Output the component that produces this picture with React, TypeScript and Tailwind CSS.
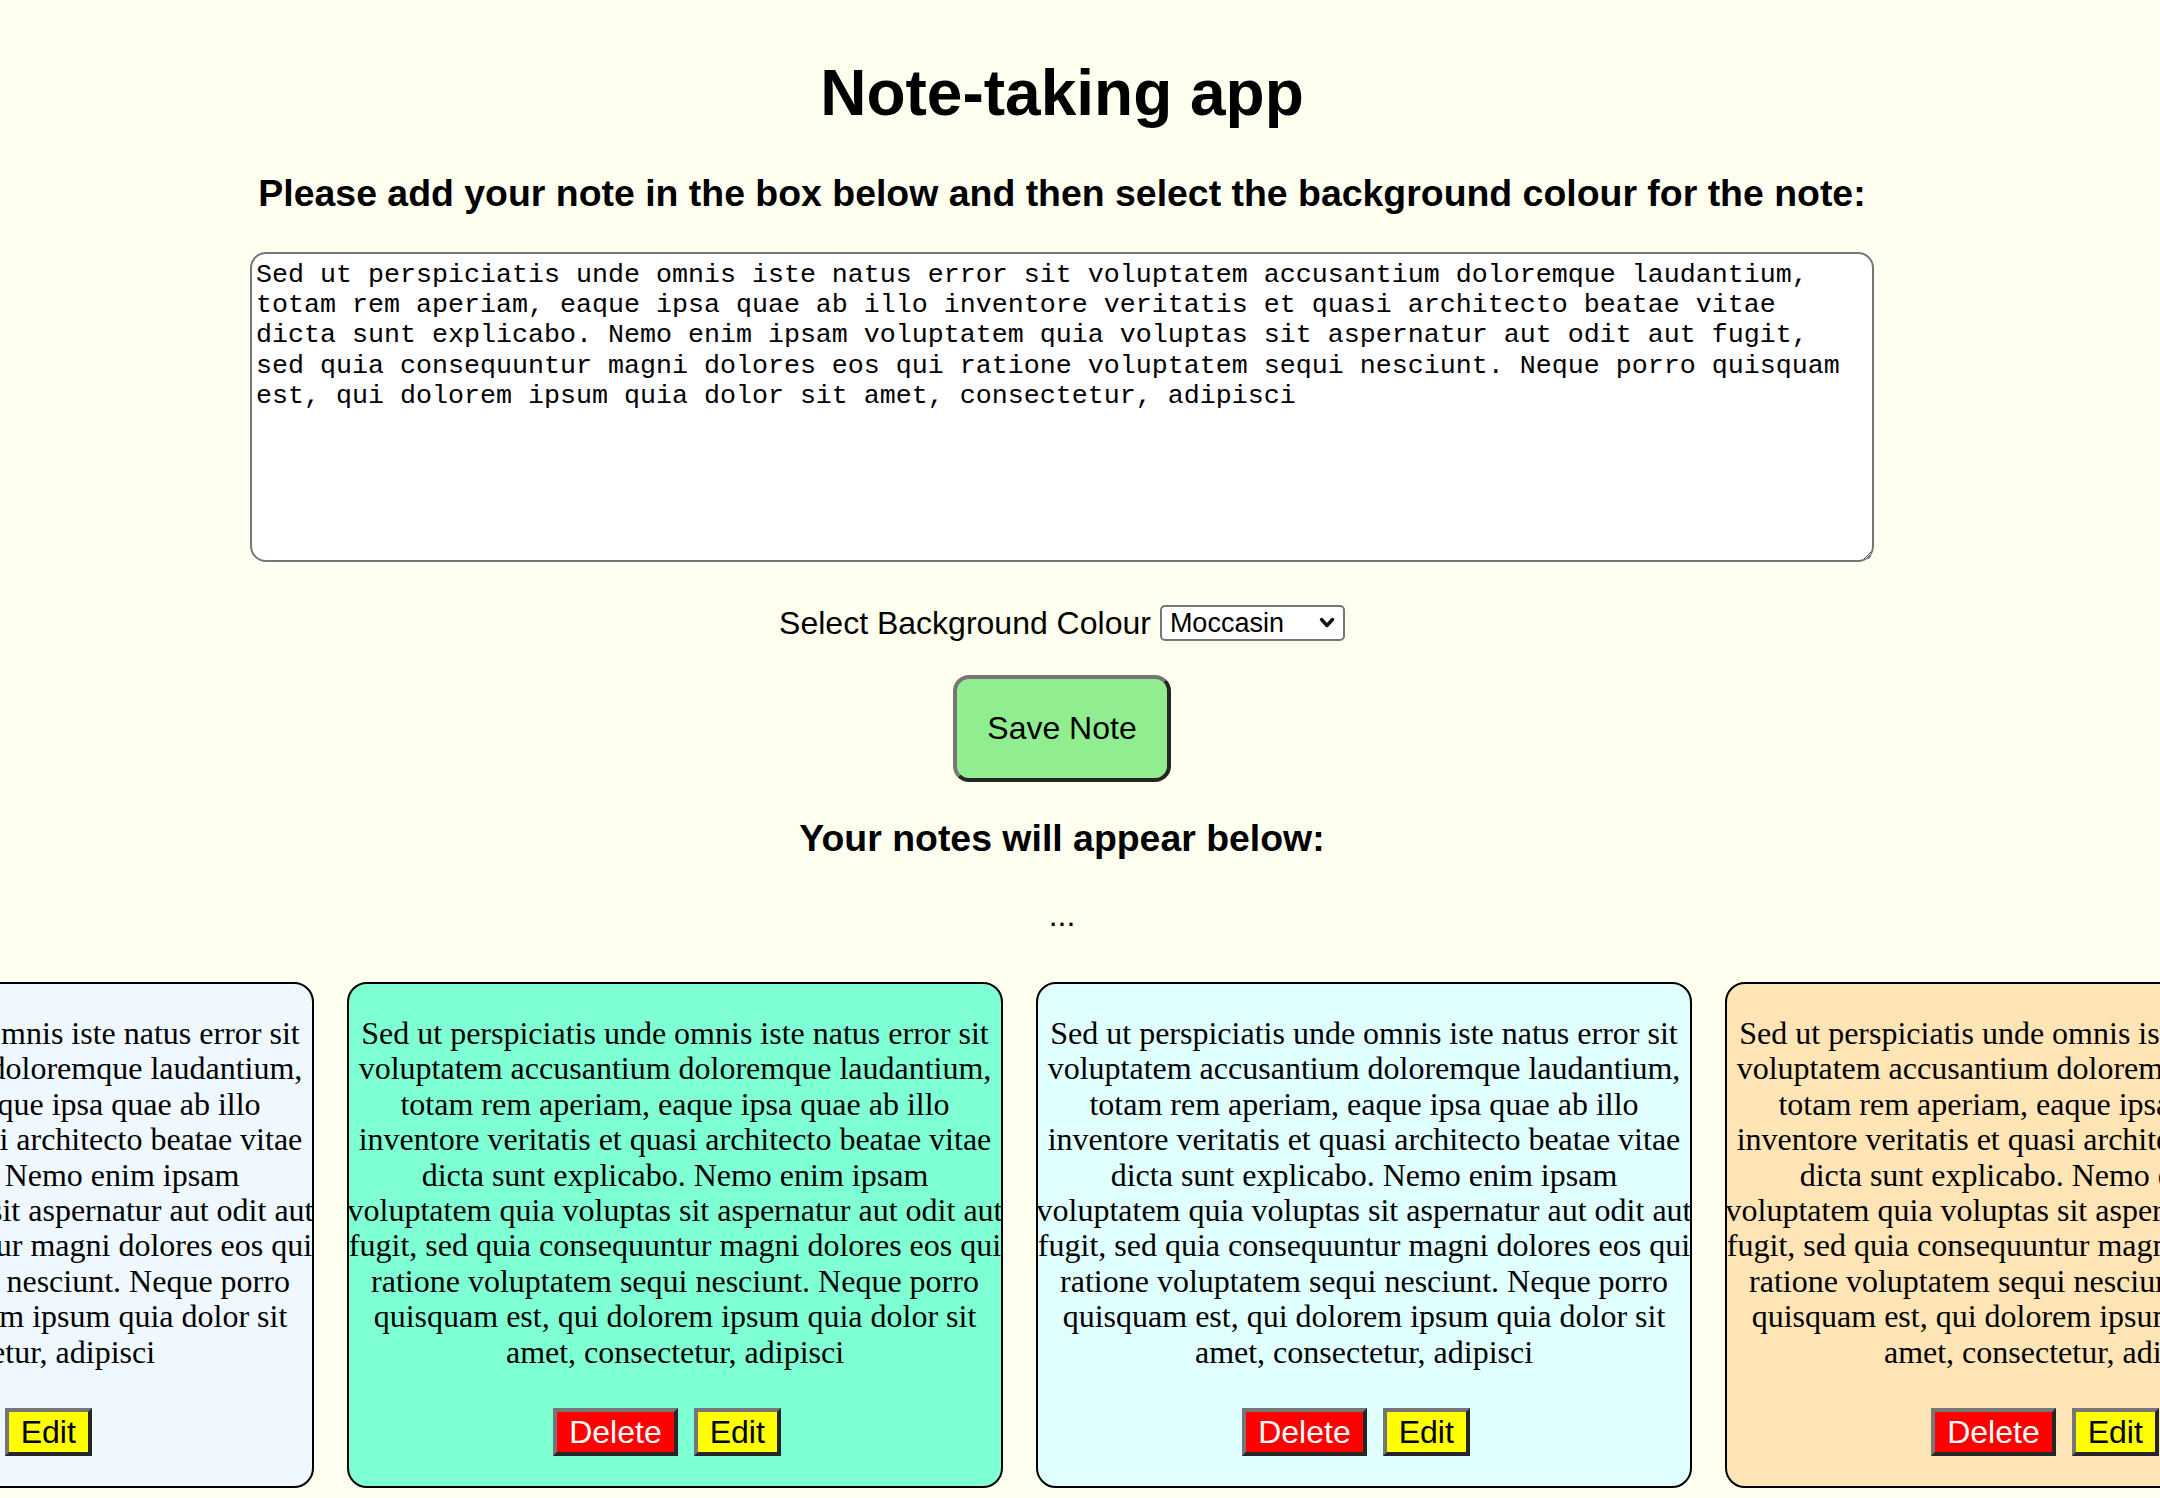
import { useState } from "react";

const LOREM =
  "Sed ut perspiciatis unde omnis iste natus error sit voluptatem accusantium doloremque laudantium, totam rem aperiam, eaque ipsa quae ab illo inventore veritatis et quasi architecto beatae vitae dicta sunt explicabo. Nemo enim ipsam voluptatem quia voluptas sit aspernatur aut odit aut fugit, sed quia consequuntur magni dolores eos qui ratione voluptatem sequi nesciunt. Neque porro quisquam est, qui dolorem ipsum quia dolor sit amet, consectetur, adipisci";

const colours = ["AliceBlue", "Aquamarine", "LightCyan", "Moccasin", "Lavender", "MistyRose"];

type Note = { id: number; text: string; bg: string };

const notes: Note[] = [
  { id: 1, text: LOREM, bg: "bg-[#f0f8ff]" },
  { id: 2, text: LOREM, bg: "bg-[#7fffd4]" },
  { id: 3, text: LOREM, bg: "bg-[#e0ffff]" },
  { id: 4, text: LOREM, bg: "bg-[#ffe4b5]" },
];

function NoteCard({ note }: { note: Note }) {
  return (
    <div
      className={`${note.bg} flex w-[656px] shrink-0 flex-col rounded-[20px] border-2 border-black pb-[30px]`}
    >
      <p className="-mx-[3px] mt-[32px] text-center font-['Liberation_Serif',serif] text-[32px] leading-[35.4px] text-black">
        {note.text}
      </p>
      <div className="mt-[38px] flex justify-center">
        <button className="mr-[16px] border-4 border-t-[#767676] border-l-[#767676] border-b-[#262626] border-r-[#262626] bg-[#ff0000] px-[12px] py-[2px] text-[32px] leading-[36px] text-white">
          Delete
        </button>
        <button className="mr-[16px] border-4 border-t-[#767676] border-l-[#767676] border-b-[#262626] border-r-[#262626] bg-[#ffff00] px-[12px] py-[2px] text-[32px] leading-[36px] text-black">
          Edit
        </button>
      </div>
    </div>
  );
}

export default function App() {
  const [colour, setColour] = useState("Moccasin");

  return (
    <div className="min-h-screen w-full overflow-hidden bg-[#fffff0] pb-[10px] font-['Liberation_Sans',Arial,sans-serif] text-black">
      <div className="flex flex-col items-center pr-[36px]">
        <h1 className="mt-[56px] text-[64px] font-bold leading-[74px]">Note-taking app</h1>
        <h3 className="mt-[42px] text-[37.44px] font-bold leading-[43px]">
          Please add your note in the box below and then select the background colour for the note:
        </h3>
        <textarea
          defaultValue={LOREM}
          spellCheck={false}
          className="mt-[37px] h-[310px] w-[1624px] rounded-[16px] border-2 border-[#767676] bg-white px-[4px] pt-[6px] pb-[4px] font-['Liberation_Mono','Courier_New',monospace] text-[26.67px] leading-[30.2px] text-black outline-none"
        />
        <div className="mt-[43px] flex h-[36px] items-center gap-[9px]">
          <label className="text-[32px] leading-[37px]">Select Background Colour</label>
          <div className="relative">
            <select
              value={colour}
              onChange={(e) => setColour(e.target.value)}
              className="h-[36px] w-[185px] appearance-none rounded-[5px] border-2 border-[#767676] bg-white pl-[8px] text-[27px] leading-[30px] text-black outline-none"
            >
              {colours.map((c) => (
                <option key={c} value={c}>
                  {c}
                </option>
              ))}
            </select>
            <svg
              className="pointer-events-none absolute right-[10px] top-[12px]"
              width="16"
              height="12"
              viewBox="0 0 16 12"
              fill="none"
            >
              <path d="M2.5 2.5 L8 8.5 L13.5 2.5" stroke="#111" strokeWidth="3.4" strokeLinecap="round" strokeLinejoin="round" />
            </svg>
          </div>
        </div>
        <button className="mt-[34px] rounded-[16px] border-4 border-t-[#767676] border-l-[#767676] border-b-[#262626] border-r-[#262626] bg-[#90ee90] px-[30px] py-[31px] text-[32px] leading-[37px] text-black">
          Save Note
        </button>
        <h3 className="mt-[35px] text-[37.44px] font-bold leading-[43px]">Your notes will appear below:</h3>
        <p className="mt-[37px] text-[32px] leading-[37px]">...</p>
      </div>
      <div className="mt-[48px] w-full overflow-hidden">
        <div className="ml-[-342px] flex gap-[33px]">
          {notes.map((n) => (
            <NoteCard key={n.id} note={n} />
          ))}
        </div>
      </div>
    </div>
  );
}
